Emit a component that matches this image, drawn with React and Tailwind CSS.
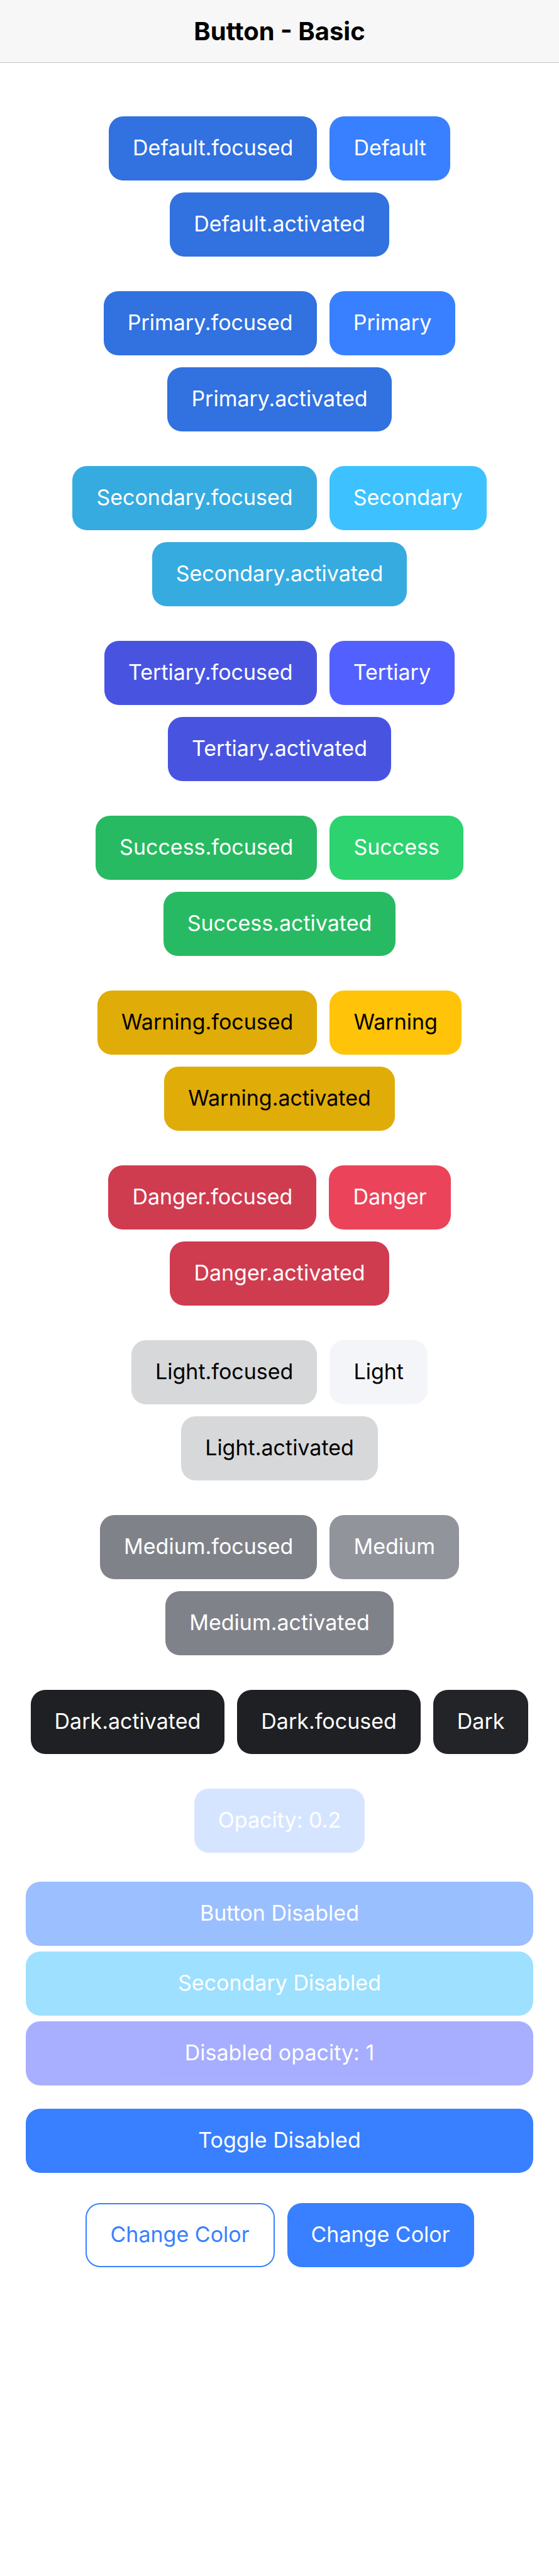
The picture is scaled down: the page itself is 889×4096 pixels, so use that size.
const groups = [
  { name: "Default", base: "bg-[#3880ff] text-white", shade: "bg-[#3171e0] text-white" },
  { name: "Primary", base: "bg-[#3880ff] text-white", shade: "bg-[#3171e0] text-white" },
  { name: "Secondary", base: "bg-[#3dc2ff] text-white", shade: "bg-[#36abe0] text-white" },
  { name: "Tertiary", base: "bg-[#5260ff] text-white", shade: "bg-[#4854e0] text-white" },
  { name: "Success", base: "bg-[#2dd36f] text-white", shade: "bg-[#28ba62] text-white" },
  { name: "Warning", base: "bg-[#ffc409] text-black", shade: "bg-[#e0ac08] text-black" },
  { name: "Danger", base: "bg-[#eb445a] text-white", shade: "bg-[#cf3c4f] text-white" },
  { name: "Light", base: "bg-[#f4f5f8] text-black", shade: "bg-[#d7d8da] text-black" },
  { name: "Medium", base: "bg-[#92949c] text-white", shade: "bg-[#808289] text-white" },
];

function Button({ className = "", children, ...rest }) {
  return (
    <button
      type="button"
      className={`flex h-[102px] items-center justify-center rounded-[23px] px-[38px] pb-[3px] text-[34px] leading-none whitespace-nowrap ${className}`}
      {...rest}
    >
      {children}
    </button>
  );
}

function Row({ children }) {
  return <div className="flex justify-center gap-5">{children}</div>;
}

export default function App() {
  return (
    <div className="min-h-screen bg-white font-['Inter','Liberation_Sans',sans-serif]">
      <header className="flex h-[100px] items-center justify-center border-b border-[#c4c4c4] bg-[#f7f7f7]">
        <h1 className="text-[40px] leading-none font-bold text-black">Button - Basic</h1>
      </header>
      <main className="flex flex-col px-[41px] pt-[85px]">
        <div className="flex flex-col gap-[55px]">
          {groups.map((g) => (
            <section key={g.name} aria-label={g.name} className="flex flex-col gap-[19px]">
              <Row>
                <Button className={g.shade}>{g.name}.focused</Button>
                <Button className={g.base}>{g.name}</Button>
              </Row>
              <Row>
                <Button className={g.shade}>{g.name}.activated</Button>
              </Row>
            </section>
          ))}
          <Row>
            <Button className="bg-[#1e2023] text-white">Dark.activated</Button>
            <Button className="bg-[#1e2023] text-white">Dark.focused</Button>
            <Button className="bg-[#222428] text-white">Dark</Button>
          </Row>
          <Row>
            <Button className="bg-[#3880ff] text-white opacity-20">Opacity: 0.2</Button>
          </Row>
        </div>
        <div className="mt-[46px] flex flex-col gap-[9px]">
          <Button disabled className="bg-[#3880ff] text-white opacity-50">Button Disabled</Button>
          <Button disabled className="bg-[#3dc2ff] text-white opacity-50">Secondary Disabled</Button>
          <Button disabled className="bg-[#5260ff] text-white opacity-50">Disabled opacity: 1</Button>
        </div>
        <div className="mt-[37px] flex flex-col">
          <Button className="bg-[#3880ff] text-white">Toggle Disabled</Button>
        </div>
        <div className="mt-12">
          <Row>
            <Button className="border-2 border-[#3880ff] bg-white text-[#3880ff]">Change Color</Button>
            <Button className="bg-[#3880ff] text-white">Change Color</Button>
          </Row>
        </div>
      </main>
    </div>
  );
}
